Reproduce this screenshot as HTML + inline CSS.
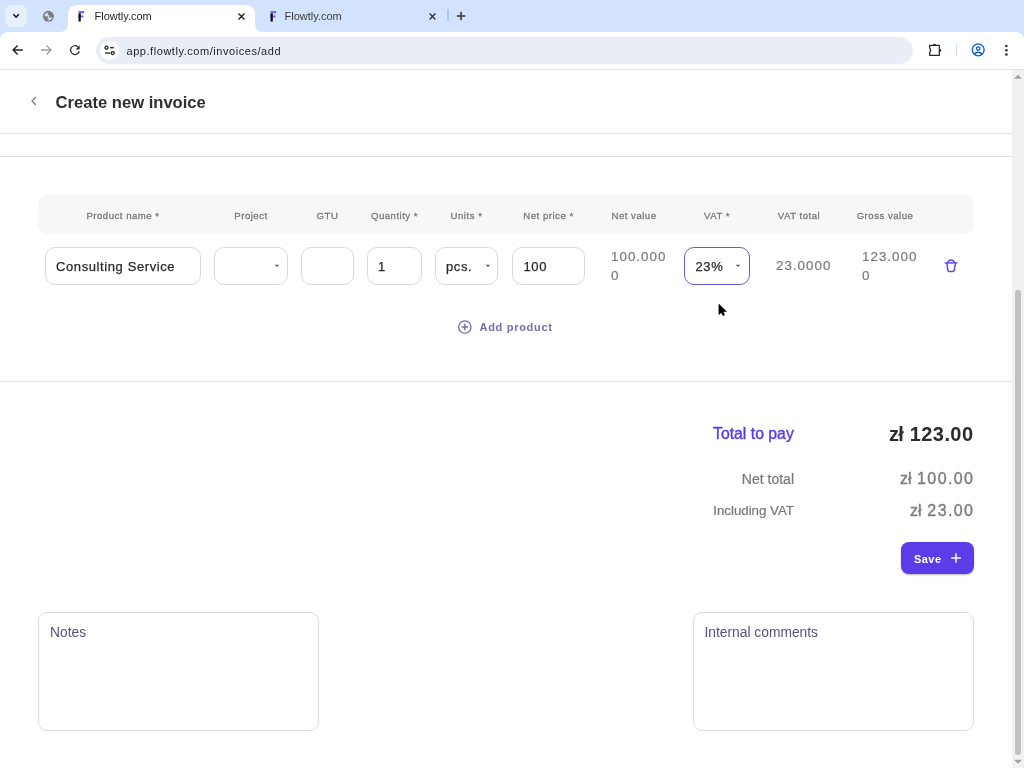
<!DOCTYPE html>
<html><head><meta charset="utf-8">
<style>
*{box-sizing:border-box;margin:0;padding:0}
html,body{width:1024px;height:768px;overflow:hidden;background:#fff;font-family:"Liberation Sans",sans-serif}
#root{position:absolute;left:0;top:0;width:1024px;height:768px;will-change:transform}
.a{position:absolute}
#strip{left:0;top:0;width:1024px;height:40px;background:#d3e3fd}
#toolbar{left:0;top:32px;width:1024px;height:38px;background:#fff;border-radius:8px 8px 0 0;border-bottom:1px solid #e1e3e1}
.tabt{font-size:11px;color:#1f1f1f;white-space:nowrap;line-height:14px}
.hl{font-size:9.6px;letter-spacing:0.5px;color:#777;white-space:nowrap;line-height:12px;-webkit-text-stroke:0.28px #777}
.inp{border:1px solid #d9d9de;border-radius:10px;background:#fff;height:38px;top:247px}
.it{font-size:13px;color:#2a2a2a;line-height:16px;white-space:nowrap;letter-spacing:0.6px;-webkit-text-stroke:0.25px #2a2a2a}
.num{font-size:13.4px;color:#7a7a7a;letter-spacing:1px;-webkit-text-stroke:0.2px #7a7a7a;line-height:19px;white-space:nowrap}
.line{left:0;width:1012px;height:1px;background:#e2e2e2}
</style></head><body><div id="root">
<!-- browser chrome -->
<div id="strip" class="a"></div>
<div class="a" style="left:5px;top:5px;width:22px;height:22px;border-radius:7px;background:#e9f0fd"></div>
<svg class="a" style="left:10px;top:10px" width="12" height="12" viewBox="0 0 12 12"><path d="M3.3 4.3 L6.1 7.1 L8.9 4.3" fill="none" stroke="#1f1f1f" stroke-width="1.6"/></svg>
<svg class="a" style="left:40px;top:8px" width="16" height="16" viewBox="0 0 16 16"><circle cx="8.4" cy="8.3" r="5.5" fill="#7b7b7b"/><path d="M4.3 8.3 C4.4 6.6 5.8 4.9 8.4 4.3 L7.6 6.3 L9.6 8.1 L9.4 8.4 Z" fill="#d3e3fd"/><path d="M8.2 8.6 L10.1 9.8 L12.6 9.2 C12.3 11 10.6 12.5 7.2 12.8 L9.0 11.1 L7.4 10.2 Z" fill="#d3e3fd"/></svg>
<!-- active tab -->
<svg class="a" style="left:60px;top:5px" width="203" height="28" viewBox="0 0 203 28"><path d="M0 27 Q8 27 8 19 L8 10 Q8 0 18 0 L185 0 Q195 0 195 10 L195 19 Q195 27 203 27 L203 28 L0 28Z" fill="#fff"/></svg>
<svg class="a" style="left:77px;top:10px" width="9" height="12" viewBox="0 0 9 12"><rect x="1.5" y="1" width="5.6" height="2.3" fill="#7b61ff"/><rect x="1.5" y="5.4" width="4.9" height="2.1" fill="#7b61ff"/><rect x="1.5" y="3.3" width="2.3" height="8.2" fill="#111"/></svg>
<div class="a tabt" style="left:94.5px;top:9px">Flowtly.com</div>
<svg class="a" style="left:236px;top:11px" width="11" height="11" viewBox="0 0 11 11"><path d="M2.5 2.5 L8.5 8.5 M8.5 2.5 L2.5 8.5" stroke="#1f1f1f" stroke-width="1.4"/></svg>
<!-- second tab -->
<svg class="a" style="left:269px;top:10px" width="9" height="12" viewBox="0 0 9 12"><rect x="1.5" y="1" width="5.6" height="2.3" fill="#7b61ff"/><rect x="1.5" y="5.4" width="4.9" height="2.1" fill="#7b61ff"/><rect x="1.5" y="3.3" width="2.3" height="8.2" fill="#111"/></svg>
<div class="a tabt" style="left:284.5px;top:9px;color:#3c3c3c">Flowtly.com</div>
<svg class="a" style="left:426.5px;top:10.5px" width="11" height="11" viewBox="0 0 11 11"><path d="M2.6 2.6 L8.4 8.4 M8.4 2.6 L2.6 8.4" stroke="#333" stroke-width="1.35"/></svg>
<div class="a" style="left:447px;top:9px;width:1.5px;height:12px;background:#a8c7fa"></div>
<svg class="a" style="left:455px;top:10px" width="12" height="12" viewBox="0 0 12 12"><path d="M6 1.8 V10.2 M1.8 6 H10.2" stroke="#333" stroke-width="1.5"/></svg>

<div id="toolbar" class="a"></div>
<!-- nav icons -->
<svg class="a" style="left:10px;top:42px" width="16" height="16" viewBox="0 0 16 16"><path d="M12.8 8 H3.4 M7.6 3.5 L3.1 8 L7.6 12.5" fill="none" stroke="#1f1f1f" stroke-width="1.35"/></svg>
<svg class="a" style="left:38px;top:42px" width="16" height="16" viewBox="0 0 16 16"><path d="M3 8 H12.8 M8.4 3.4 L13 8 L8.4 12.6" fill="none" stroke="#9a9a9a" stroke-width="1.3"/></svg>
<svg class="a" style="left:67px;top:42px" width="16" height="16" viewBox="0 0 16 16"><path d="M12.25 9.24 A4.4 4.4 0 1 1 10.83 4.73" fill="none" stroke="#2a2a2a" stroke-width="1.25"/><path d="M12.6 3.2 V7.4 H8.6Z" fill="#2a2a2a"/></svg>
<div class="a" style="left:96px;top:37px;width:817px;height:27px;border-radius:13.5px;background:#e9eef6"></div>
<div class="a" style="left:99.7px;top:40.9px;width:19.3px;height:19.3px;border-radius:50%;background:#fff"></div>
<svg class="a" style="left:102px;top:43px" width="14" height="14" viewBox="0 0 14 14"><circle cx="4.5" cy="4.7" r="1.5" fill="none" stroke="#1f1f1f" stroke-width="1.3"/><path d="M8 4.7 H11.8" stroke="#1f1f1f" stroke-width="1.3"/><circle cx="10.8" cy="10.1" r="1.5" fill="none" stroke="#1f1f1f" stroke-width="1.3"/><path d="M3.1 10.1 H8.3" stroke="#1f1f1f" stroke-width="1.3"/></svg>
<div class="a" style="left:126.5px;top:44px;font-size:11px;letter-spacing:0.55px;color:#1f1f1f;line-height:14px;white-space:nowrap">app.flowtly.com/invoices/add</div>
<svg class="a" style="left:927px;top:43px" width="16" height="14" viewBox="0 0 16 14"><path d="M2.65 2.45 H12.35 V12.35 H2.65 V9.6 Q4.7 7.4 2.65 5.2 Z" fill="none" stroke="#262626" stroke-width="1.2" stroke-linejoin="round"/><path d="M6.0 2.6 A1.55 1.75 0 0 1 9.1 2.6 Z" fill="#262626"/><path d="M12.3 5.85 A1.9 1.55 0 0 1 12.3 8.95 Z" fill="#262626"/></svg>
<div class="a" style="left:955.5px;top:44px;width:1.5px;height:12px;background:#c9dcf8"></div>
<svg class="a" style="left:970px;top:42px" width="16" height="16" viewBox="0 0 16 16"><circle cx="8.2" cy="7.85" r="5.95" fill="none" stroke="#0b57d0" stroke-width="1.35"/><circle cx="8.2" cy="6.6" r="1.75" fill="none" stroke="#0b57d0" stroke-width="1.3"/><path d="M4.0 12.0 Q8.2 8.6 12.4 12.0" fill="none" stroke="#0b57d0" stroke-width="1.4"/></svg>
<svg class="a" style="left:1002px;top:42px" width="8" height="16" viewBox="0 0 8 16"><circle cx="4.4" cy="3.9" r="1.25" fill="#2a2a2a"/><circle cx="4.4" cy="8.3" r="1.25" fill="#2a2a2a"/><circle cx="4.4" cy="12.6" r="1.25" fill="#2a2a2a"/></svg>

<!-- scrollbar -->
<div class="a" style="left:1012px;top:70px;width:12px;height:698px;background:#f1f1f1"></div>
<svg class="a" style="left:1012px;top:70px" width="12" height="12" viewBox="0 0 12 12"><path d="M2 8.8 L6 4.8 L10 8.8Z" fill="#a3a3a3"/></svg>
<svg class="a" style="left:1012px;top:756px" width="12" height="12" viewBox="0 0 12 12"><path d="M2 3.8 L6 7.8 L10 3.8Z" fill="#a3a3a3"/></svg>
<div class="a" style="left:1015px;top:290px;width:6px;height:465px;border-radius:3px;background:#c1c1c1"></div>

<!-- page header -->
<svg class="a" style="left:28px;top:95px" width="12" height="12" viewBox="0 0 12 12"><path d="M7.8 2 L4 6 L7.8 10" fill="none" stroke="#7a7a7a" stroke-width="1.2"/></svg>
<div class="a" style="left:55.5px;top:93px;font-size:16.6px;font-weight:bold;color:#2e2e33;line-height:19px;white-space:nowrap">Create new invoice</div>
<div class="a line" style="top:133px"></div>
<div class="a line" style="top:156px"></div>

<!-- table header -->
<div class="a" style="left:38px;top:195px;width:936px;height:39px;border-radius:9px;background:#f7f7f7"></div>
<div class="a hl" style="left:45px;top:209.5px;width:156px;text-align:center">Product name *</div>
<div class="a hl" style="left:214px;top:209.5px;width:74px;text-align:center">Project</div>
<div class="a hl" style="left:301px;top:209.5px;width:53px;text-align:center">GTU</div>
<div class="a hl" style="left:367px;top:209.5px;width:55px;text-align:center">Quantity *</div>
<div class="a hl" style="left:435px;top:209.5px;width:63px;text-align:center">Units *</div>
<div class="a hl" style="left:512px;top:209.5px;width:73px;text-align:center">Net price *</div>
<div class="a hl" style="left:594px;top:209.5px;width:80px;text-align:center">Net value</div>
<div class="a hl" style="left:684px;top:209.5px;width:66px;text-align:center">VAT *</div>
<div class="a hl" style="left:759px;top:209.5px;width:80px;text-align:center">VAT total</div>
<div class="a hl" style="left:845px;top:209.5px;width:80px;text-align:center">Gross value</div>

<!-- inputs -->
<div class="a inp" style="left:45px;width:156px"></div>
<div class="a it" style="left:56px;top:259px">Consulting Service</div>
<div class="a inp" style="left:214px;width:74px"></div>
<div class="a inp" style="left:301px;width:53px"></div>
<div class="a inp" style="left:367px;width:55px"></div>
<div class="a it" style="left:378px;top:259px">1</div>
<div class="a inp" style="left:435px;width:63px"></div>
<div class="a it" style="left:446px;top:259px">pcs.</div>
<div class="a inp" style="left:512px;width:73px"></div>
<div class="a it" style="left:523.5px;top:259px">100</div>
<div class="a num" style="left:611px;top:247px">100.000<br>0</div>
<div class="a inp" style="left:684px;width:66px;border-color:#6757ea"></div>
<div class="a it" style="left:695.5px;top:259px">23%</div>
<div class="a num" style="left:776px;top:256px">23.0000</div>
<div class="a num" style="left:862px;top:247px">123.000<br>0</div>
<svg class="a" style="left:274px;top:263px" width="6" height="5" viewBox="0 0 6 5"><path d="M0.6 1.7 L5.2 1.7 L2.9 4.1Z" fill="#5a5a5a"/></svg>
<svg class="a" style="left:485px;top:263px" width="6" height="5" viewBox="0 0 6 5"><path d="M0.6 1.7 L5.2 1.7 L2.9 4.1Z" fill="#5a5a5a"/></svg>
<svg class="a" style="left:735px;top:263px" width="6" height="5" viewBox="0 0 6 5"><path d="M0.6 1.7 L5.2 1.7 L2.9 4.1Z" fill="#5a5a5a"/></svg>
<!-- trash -->
<svg class="a" style="left:943px;top:258px" width="16" height="16" viewBox="0 0 16 16"><path d="M1.7 4.9 H14.4" stroke="#6246ee" stroke-width="1.5"/><path d="M4.7 4.9 Q5.4 2.05 8.1 2.05 Q10.8 2.05 11.5 4.9" fill="none" stroke="#6246ee" stroke-width="1.5"/><path d="M3.85 4.9 L4.8 12.2 Q5.0 13.55 6.3 13.55 H9.7 Q11.0 13.55 11.2 12.2 L12.55 4.9" fill="none" stroke="#6246ee" stroke-width="1.5"/></svg>

<!-- add product -->
<svg class="a" style="left:457px;top:319px" width="16" height="16" viewBox="0 0 16 16"><circle cx="7.8" cy="8" r="6.2" fill="none" stroke="#756eab" stroke-width="1.3"/><path d="M7.8 4.8 V11.2 M4.6 8 H11" stroke="#756eab" stroke-width="1.4"/></svg>
<div class="a" style="left:479.5px;top:320px;font-size:11px;letter-spacing:0.7px;font-weight:bold;color:#756eab;line-height:14px;white-space:nowrap">Add product</div>
<div class="a line" style="top:381px"></div>

<!-- totals -->
<div class="a" style="left:713px;top:424px;font-size:15.8px;color:#5b3be8;line-height:19px;white-space:nowrap;-webkit-text-stroke:0.4px #5b3be8">Total to pay</div>
<div class="a" style="right:50.6px;top:422px;font-size:20px;font-weight:bold;color:#2b2b2f;line-height:24px;white-space:nowrap;letter-spacing:0.4px">123.00</div>
<div class="a" style="right:121px;top:422px;font-size:20px;font-weight:bold;color:#2b2b2f;line-height:24px;white-space:nowrap;letter-spacing:-0.8px">zł</div>
<div class="a" style="left:694px;top:471px;width:100px;text-align:right;font-size:14px;color:#777;line-height:16px;white-space:nowrap;-webkit-text-stroke:0.2px #777">Net total</div>
<div class="a" style="right:49.6px;top:469px;font-size:16px;color:#7e7e7e;line-height:20px;white-space:nowrap;letter-spacing:1.4px;-webkit-text-stroke:0.4px #7e7e7e">100.00</div>
<div class="a" style="right:112.5px;top:469px;font-size:16px;color:#7e7e7e;line-height:20px;white-space:nowrap;-webkit-text-stroke:0.4px #7e7e7e">zł</div>
<div class="a" style="left:694px;top:503px;width:100px;text-align:right;font-size:13.3px;color:#777;line-height:16px;white-space:nowrap;-webkit-text-stroke:0.2px #777">Including VAT</div>
<div class="a" style="right:49.6px;top:501px;font-size:16px;color:#7e7e7e;line-height:20px;white-space:nowrap;letter-spacing:1.4px;-webkit-text-stroke:0.4px #7e7e7e">23.00</div>
<div class="a" style="right:102.5px;top:501px;font-size:16px;color:#7e7e7e;line-height:20px;white-space:nowrap;-webkit-text-stroke:0.4px #7e7e7e">zł</div>

<!-- save -->
<div class="a" style="left:901px;top:542px;width:73px;height:32px;border-radius:8px;background:#5c3be9;box-shadow:0 1px 2px rgba(0,0,0,0.3)"></div>
<div class="a" style="left:914px;top:552px;font-size:11px;letter-spacing:0.45px;font-weight:bold;color:#fff;line-height:14px;white-space:nowrap">Save</div>
<svg class="a" style="left:950px;top:552px" width="12" height="12" viewBox="0 0 12 12"><path d="M6 1.2 V10.8 M1.2 6 H10.8" stroke="#fff" stroke-width="1.45"/></svg>

<!-- notes -->
<div class="a" style="left:38px;top:612px;width:281px;height:119px;border:1px solid #dcdce2;border-radius:9px"></div>
<div class="a" style="left:50px;top:625px;font-size:13.8px;color:#57527e;line-height:16px;white-space:nowrap">Notes</div>
<div class="a" style="left:693px;top:612px;width:281px;height:119px;border:1px solid #dcdce2;border-radius:9px"></div>
<div class="a" style="left:704.5px;top:625px;font-size:13.8px;color:#57527e;line-height:16px;white-space:nowrap">Internal comments</div>

<!-- cursor -->
<svg class="a" style="left:717px;top:302px" width="12" height="18" viewBox="0 0 12 18"><path d="M1.9 2.2 L1.9 12.6 L4.3 10.4 L5.9 13.6 L7.5 12.9 L6.1 9.8 L9.4 9.5Z" fill="#000" stroke="#000" stroke-width="0.6" stroke-linejoin="round"/></svg>
</div></body></html>
